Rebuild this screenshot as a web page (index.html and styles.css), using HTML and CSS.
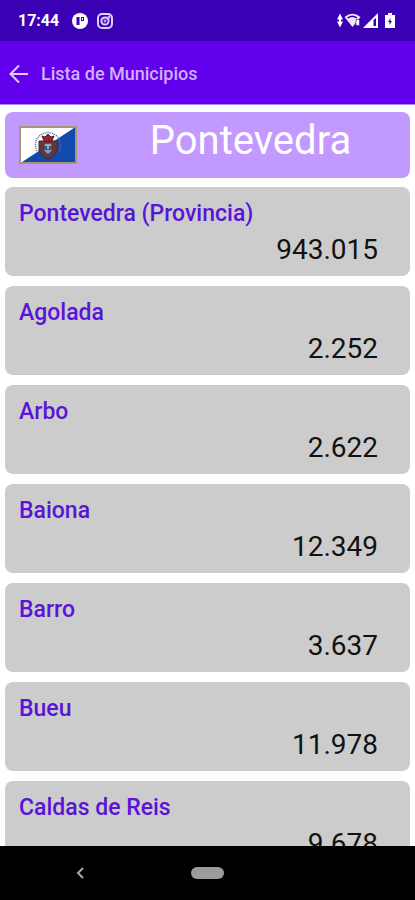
FILE: index.html
```html
<!DOCTYPE html>
<html lang="es">
<head>
<meta charset="utf-8">
<meta name="viewport" content="width=device-width, initial-scale=1">
<title>Lista de Municipios</title>
<link rel="stylesheet" href="styles.css">
</head>
<body>
<div class="screen">
  <div class="status">
    <span class="clock">17:44</span>
    <svg class="status-icon" viewBox="0 0 16 16" aria-hidden="true"><circle cx="8" cy="8" r="8" fill="#fff"/><path d="M4.500 4h3v8h-3z" fill="#3a00b0"/><path d="M9 4h3v4H9z" fill="#3a00b0"/><path d="M10 5h1v2h-1z" fill="#fff"/></svg>
    <svg class="status-icon" viewBox="0 0 16 16" aria-hidden="true" fill="none" stroke="#dccfff" stroke-width="2"><rect x="1" y="1" width="14" height="14" rx="4"/><circle cx="8" cy="8" r="3.600"/><circle cx="12" cy="4" r=".5"/><circle cx="8" cy="8" r=".4"/></svg>
    <svg class="signals" viewBox="0 0 60 18" aria-hidden="true" fill="#fff">
      <path d="M3 1.500 6 7.500H0zM3 15.500 0 9.500h6zM2 6h2v5H2z"/>
      <path d="M7.500 5Q15.500-1.500 23.500 5L15.500 15z" fill="#f0e8ff"/>
      <path d="M10.500 6Q15.500 2.500 20 6" fill="none" stroke="#3a00b0" stroke-width="1.500"/>
      <path d="M19 7.500h3.500v6H19z" stroke="#3a00b0" stroke-width=".6"/>
      <path d="M26 16 41 1v15z"/><path d="M36.500 8 39 6v8h-2.500z" fill="#3a00b0"/>
      <path d="M51 1h4v2h3v13H48V3h3z"/><path d="m53.500 6-2.500 4h1.500v3l2.500-4h-1.500z" fill="#3a00b0"/>
    </svg>
  </div>
  <header class="appbar">
    <button class="back" type="button" aria-label="Atrás"><svg viewBox="0 0 20 20" fill="none" stroke="currentColor" stroke-width="2"><path d="M19 10H2M10 1.500 1.500 10l8.500 8.500"/></svg></button>
    <h1 class="appbar-title">Lista de Municipios</h1>
  </header>
  <main class="content">
    <section class="province">
      <svg class="flag" viewBox="0 0 58 38" role="img" aria-label="Bandera de Pontevedra">
        <path d="M0 0h58v38H0z" fill="#fff"/><path d="M58 0v38H0z" fill="#1249ae"/>
        <path d="M18 25a12.500 12.500 0 1 1 22 0" fill="none" stroke="#5c6c8c" stroke-width="1.500" stroke-dasharray="1 1"/>
        <path d="M20 15h18v10q-2 5-9 8-7-3-9-8z" fill="#6d3431" stroke="#343345"/>
        <path d="M25 17h8v8l-4 4-4-4z" fill="#405873"/>
        <path d="M26 18h6v2h-6zM28 20h2v3h-2z" fill="#a4a7ad"/><path d="M25 24h8l-4 4z" fill="#68a7dc"/>
        <path d="m23 10 3 1 3-3 3 3 3-1-2 5h-8z" fill="#a51e2c" stroke="#552236"/>
        <path d="M1 1h56v36H1z" fill="none" stroke="#ab9473" stroke-width="2"/>
      </svg>
      <h2 class="province-name">Pontevedra</h2>
    </section>
    <ul class="list">
      <li class="card"><span class="name">Pontevedra (Provincia)</span><span class="count">943.015</span></li>
      <li class="card"><span class="name">Agolada</span><span class="count">2.252</span></li>
      <li class="card"><span class="name">Arbo</span><span class="count">2.622</span></li>
      <li class="card"><span class="name">Baiona</span><span class="count">12.349</span></li>
      <li class="card"><span class="name">Barro</span><span class="count">3.637</span></li>
      <li class="card"><span class="name">Bueu</span><span class="count">11.978</span></li>
      <li class="card"><span class="name">Caldas de Reis</span><span class="count">9.678</span></li>
    </ul>
  </main>
  <nav class="navbar" aria-label="Sistema">
    <button class="nav-back" type="button" aria-label="Volver"><svg viewBox="0 0 8 12" fill="none" stroke="currentColor" stroke-width="2"><path d="M7 1 2 6l5 5"/></svg></button>
    <button class="nav-home" type="button" aria-label="Inicio"></button>
  </nav>
</div>
</body>
</html>
```
FILE: styles.css
```css
* {
  box-sizing: border-box;
}

body {
  margin: 0;
  background: #fff;
  font-family: Roboto, "Liberation Sans", sans-serif;
}

button {
  padding: 0;
  border: 0;
  background: none;
}

h1,
h2,
ul {
  margin: 0;
  padding: 0;
}

svg {
  display: block;
}

.screen {
  display: flex;
  flex-direction: column;
  height: 100vh;
}

.status {
  display: flex;
  align-items: center;
  gap: 9px;
  height: 41px;
  padding: 0 18px;
  background: #3a00b3;
  color: #fff;
  flex: none;
}

.clock {
  margin-right: 4px;
  font-size: 16px;
  font-weight: 700;
}

.status-icon {
  width: 16px;
  height: 16px;
}

.signals {
  width: 60px;
  height: 18px;
  margin-left: auto;
}

.appbar {
  display: flex;
  align-items: center;
  gap: 12px;
  height: 64px;
  padding: 2px 9px 0;
  background: #6200ee;
  border-bottom: 1px solid #b48cff;
  color: #d1b0ff;
  flex: none;
}

.back {
  width: 20px;
  height: 20px;
  color: #e0ccff;
}

.appbar-title {
  font-size: 18px;
  font-weight: 500;
}

.content {
  flex: 1;
  min-height: 0;
  padding: 7px 5px 0;
  overflow: hidden;
}

.province {
  display: flex;
  align-items: center;
  gap: 14px;
  height: 66px;
  padding-left: 14px;
  border-radius: 8px;
  background: #c299ff;
}

.flag {
  width: 58px;
  height: 38px;
}

.province-name {
  flex: 1;
  padding-bottom: 8px;
  color: #fff;
  font-size: 40px;
  font-weight: 400;
  line-height: 48px;
  text-align: center;
}

.list {
  display: grid;
  gap: 10px;
  padding-top: 9px;
  list-style: none;
}

.card {
  display: flex;
  flex-direction: column;
  height: 89px;
  padding: 11px 32px 0 14px;
  border-radius: 8px;
  background: #ccc;
}

.name {
  color: #5a14d8;
  font-size: 23px;
  font-weight: 500;
  line-height: 32px;
}

.count {
  color: #111;
  font-size: 28px;
  line-height: 40px;
  text-align: right;
}

.navbar {
  display: grid;
  grid-template-columns: 1fr auto 1fr;
  align-items: center;
  height: 54px;
  background: #000;
  flex: none;
}

.nav-back {
  width: 8px;
  height: 12px;
  margin-left: 76px;
  color: #aaa;
}

.nav-home {
  width: 33px;
  height: 12px;
  border-radius: 6px;
  background: #9b9b9b;
}
```
